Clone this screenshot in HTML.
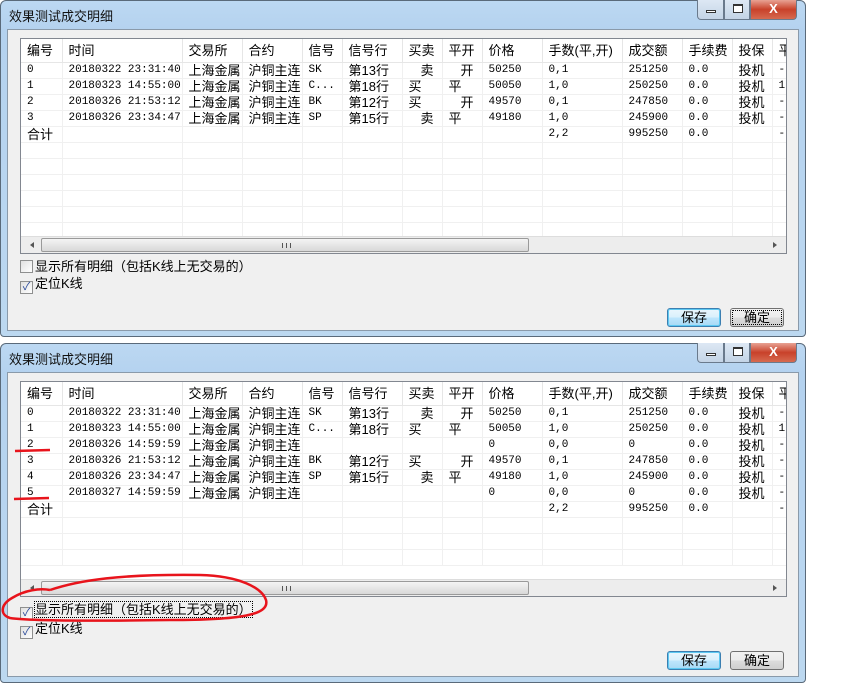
<!DOCTYPE html>
<html><head><meta charset="utf-8"><style>
*{box-sizing:border-box;margin:0;padding:0}
body{width:860px;height:686px;background:#fff;position:relative;overflow:hidden;font-family:"Liberation Sans","Noto Sans CJK SC",sans-serif}
.win{position:absolute;left:0;width:806px;border:1px solid #5a6a7a;border-radius:6px 6px 4px 4px;background:linear-gradient(#bcd8f2,#b4d2ef 30px,#bcd8f0);}
.title{position:absolute;left:8px;top:5px;font-size:13px;color:#111}
.ctl{position:absolute;top:-1px;height:20px;border:1px solid #6a7a8c;border-top:none}
.min{left:696px;width:27px;border-radius:0 0 0 4px;background:linear-gradient(#dde8f4,#c4d4e6)}
.max{left:723px;width:26px;background:linear-gradient(#dde8f4,#c4d4e6)}
.cls{left:749px;width:47px;border-radius:0 0 4px 0;background:linear-gradient(#e8a293,#c8412a 50%,#d66a50);color:#fff;font-weight:bold;font-size:13px;text-align:center;line-height:18px}
.client{position:absolute;left:6px;top:28px;right:6px;bottom:5px;background:#f0f0f0;border:1px solid #8a9aaa}
.list{position:absolute;left:12px;top:8px;width:767px;height:216px;border:1px solid #828790;background:#fff;overflow:hidden}
table{border-collapse:collapse;table-layout:fixed;width:781px;font-size:11px;font-family:"Liberation Mono","Noto Sans CJK SC",monospace}
td{height:16px;border-right:1px solid #f0f0f0;border-bottom:1px solid #f0f0f0;padding-left:6px;white-space:nowrap;overflow:hidden;line-height:15px;color:#000}
tr.h td{height:23px;font-size:13px;font-family:"Liberation Sans","Noto Sans CJK SC",sans-serif;border-right:1px solid #e6e6e6;border-bottom:1px solid #e6e6e6}
.zh{font-family:"Liberation Sans","Noto Sans CJK SC",sans-serif;font-size:13px}
.i{padding-left:18px}
.sb{position:absolute;left:0;right:0;bottom:0;height:17px;background:#ededed;border-top:1px solid #ddd}
.thumb{position:absolute;left:20px;width:488px;top:1px;height:14px;border:1px solid #9a9a9a;border-radius:2px;background:linear-gradient(#f4f4f4,#d8d8d8)}
.thumb:after{content:"";position:absolute;left:240px;top:4px;width:7px;height:5px;border-left:1px solid #555;border-right:1px solid #555;background:linear-gradient(90deg,transparent 3px,#555 3px,#555 4px,transparent 4px)}
.al{position:absolute;left:6px;top:5px;border:3px solid transparent;border-right:4px solid #555}
.ar{position:absolute;right:6px;top:5px;border:3px solid transparent;border-left:4px solid #555}
.cb{position:absolute;left:12px;font-size:13px;color:#000;height:16px;line-height:16px}
.cb i{display:inline-block;width:13px;height:13px;border:1px solid #8e8f8f;background:linear-gradient(135deg,#e0e0e0,#fff);vertical-align:-2px;margin-right:2px;position:relative;font-style:normal;color:#2a4a9a;font-size:11px;line-height:11px;text-align:center}
.btn{position:absolute;width:54px;height:19px;border:1px solid #707070;border-radius:3px;background:linear-gradient(#f2f2f2,#ebebeb 50%,#dddddd 50%,#cfcfcf);font-size:13px;text-align:center;line-height:17px;color:#000}
.btn.d{border-color:#3c7fb1;background:linear-gradient(#eaf6fd,#d9f0fc 50%,#bee6fd 50%,#a7d9f5);box-shadow:inset 0 0 0 1px #5ec9f2}
</style></head><body>

<div class="win" style="top:0;height:337px">
<div class="title">效果测试成交明细</div>
<div class="ctl min"><div style="position:absolute;left:8px;top:10px;width:10px;height:3px;border:1px solid #333;background:#fff"></div></div>
<div class="ctl max"><div style="position:absolute;left:8px;top:4px;width:10px;height:9px;border:1px solid #333;border-top-width:2px;background:#fff"></div></div>
<div class="ctl cls">X</div>
<div class="client">
<div class="list">
<table>
<colgroup><col style="width:41px"><col style="width:120px"><col style="width:60px"><col style="width:60px"><col style="width:40px"><col style="width:60px"><col style="width:40px"><col style="width:40px"><col style="width:60px"><col style="width:80px"><col style="width:60px"><col style="width:50px"><col style="width:40px"><col style="width:30px"></colgroup>
<tr class="h"><td>编号</td><td>时间</td><td>交易所</td><td>合约</td><td>信号</td><td>信号行</td><td>买卖</td><td>平开</td><td>价格</td><td>手数(平,开)</td><td>成交额</td><td>手续费</td><td>投保</td><td>平</td></tr>
<tr><td>0</td><td>20180322 23:31:40</td><td class="zh">上海金属</td><td class="zh">沪铜主连</td><td>SK</td><td class="zh">第13行</td><td class="zh i">卖</td><td class="zh i">开</td><td>50250</td><td>0,1</td><td>251250</td><td>0.0</td><td class="zh">投机</td><td>-</td></tr>
<tr><td>1</td><td>20180323 14:55:00</td><td class="zh">上海金属</td><td class="zh">沪铜主连</td><td>C...</td><td class="zh">第18行</td><td class="zh">买</td><td class="zh">平</td><td>50050</td><td>1,0</td><td>250250</td><td>0.0</td><td class="zh">投机</td><td>1</td></tr>
<tr><td>2</td><td>20180326 21:53:12</td><td class="zh">上海金属</td><td class="zh">沪铜主连</td><td>BK</td><td class="zh">第12行</td><td class="zh">买</td><td class="zh i">开</td><td>49570</td><td>0,1</td><td>247850</td><td>0.0</td><td class="zh">投机</td><td>-</td></tr>
<tr><td>3</td><td>20180326 23:34:47</td><td class="zh">上海金属</td><td class="zh">沪铜主连</td><td>SP</td><td class="zh">第15行</td><td class="zh i">卖</td><td class="zh">平</td><td>49180</td><td>1,0</td><td>245900</td><td>0.0</td><td class="zh">投机</td><td>-</td></tr>
<tr><td class="zh">合计</td><td></td><td></td><td></td><td></td><td></td><td></td><td></td><td></td><td>2,2</td><td>995250</td><td>0.0</td><td></td><td>-</td></tr>
<tr><td></td><td></td><td></td><td></td><td></td><td></td><td></td><td></td><td></td><td></td><td></td><td></td><td></td><td></td></tr>
<tr><td></td><td></td><td></td><td></td><td></td><td></td><td></td><td></td><td></td><td></td><td></td><td></td><td></td><td></td></tr>
<tr><td></td><td></td><td></td><td></td><td></td><td></td><td></td><td></td><td></td><td></td><td></td><td></td><td></td><td></td></tr>
<tr><td></td><td></td><td></td><td></td><td></td><td></td><td></td><td></td><td></td><td></td><td></td><td></td><td></td><td></td></tr>
<tr><td></td><td></td><td></td><td></td><td></td><td></td><td></td><td></td><td></td><td></td><td></td><td></td><td></td><td></td></tr>
<tr><td></td><td></td><td></td><td></td><td></td><td></td><td></td><td></td><td></td><td></td><td></td><td></td><td></td><td></td></tr>
</table>
<div class="sb"><div class="al"></div><div class="thumb"></div><div class="ar"></div></div>
</div>
<div class="cb" style="top:229px"><i></i>显示所有明细（包括K线上无交易的）</div>
<div class="cb" style="top:246px"><i>✓</i>定位K线</div>
<div class="btn d" style="left:659px;top:278px">保存</div>
<div class="btn" style="left:722px;top:278px;outline:1px dotted #000;outline-offset:-3px">确定</div>
</div>
</div>

<div class="win" style="top:343px;height:340px">
<div class="title">效果测试成交明细</div>
<div class="ctl min"><div style="position:absolute;left:8px;top:10px;width:10px;height:3px;border:1px solid #333;background:#fff"></div></div>
<div class="ctl max"><div style="position:absolute;left:8px;top:4px;width:10px;height:9px;border:1px solid #333;border-top-width:2px;background:#fff"></div></div>
<div class="ctl cls">X</div>
<div class="client">
<div class="list">
<table>
<colgroup><col style="width:41px"><col style="width:120px"><col style="width:60px"><col style="width:60px"><col style="width:40px"><col style="width:60px"><col style="width:40px"><col style="width:40px"><col style="width:60px"><col style="width:80px"><col style="width:60px"><col style="width:50px"><col style="width:40px"><col style="width:30px"></colgroup>
<tr class="h"><td>编号</td><td>时间</td><td>交易所</td><td>合约</td><td>信号</td><td>信号行</td><td>买卖</td><td>平开</td><td>价格</td><td>手数(平,开)</td><td>成交额</td><td>手续费</td><td>投保</td><td>平</td></tr>
<tr><td>0</td><td>20180322 23:31:40</td><td class="zh">上海金属</td><td class="zh">沪铜主连</td><td>SK</td><td class="zh">第13行</td><td class="zh i">卖</td><td class="zh i">开</td><td>50250</td><td>0,1</td><td>251250</td><td>0.0</td><td class="zh">投机</td><td>-</td></tr>
<tr><td>1</td><td>20180323 14:55:00</td><td class="zh">上海金属</td><td class="zh">沪铜主连</td><td>C...</td><td class="zh">第18行</td><td class="zh">买</td><td class="zh">平</td><td>50050</td><td>1,0</td><td>250250</td><td>0.0</td><td class="zh">投机</td><td>1</td></tr>
<tr><td>2</td><td>20180326 14:59:59</td><td class="zh">上海金属</td><td class="zh">沪铜主连</td><td></td><td></td><td></td><td></td><td>0</td><td>0,0</td><td>0</td><td>0.0</td><td class="zh">投机</td><td>-</td></tr>
<tr><td>3</td><td>20180326 21:53:12</td><td class="zh">上海金属</td><td class="zh">沪铜主连</td><td>BK</td><td class="zh">第12行</td><td class="zh">买</td><td class="zh i">开</td><td>49570</td><td>0,1</td><td>247850</td><td>0.0</td><td class="zh">投机</td><td>-</td></tr>
<tr><td>4</td><td>20180326 23:34:47</td><td class="zh">上海金属</td><td class="zh">沪铜主连</td><td>SP</td><td class="zh">第15行</td><td class="zh i">卖</td><td class="zh">平</td><td>49180</td><td>1,0</td><td>245900</td><td>0.0</td><td class="zh">投机</td><td>-</td></tr>
<tr><td>5</td><td>20180327 14:59:59</td><td class="zh">上海金属</td><td class="zh">沪铜主连</td><td></td><td></td><td></td><td></td><td>0</td><td>0,0</td><td>0</td><td>0.0</td><td class="zh">投机</td><td>-</td></tr>
<tr><td class="zh">合计</td><td></td><td></td><td></td><td></td><td></td><td></td><td></td><td></td><td>2,2</td><td>995250</td><td>0.0</td><td></td><td>-</td></tr>
<tr><td></td><td></td><td></td><td></td><td></td><td></td><td></td><td></td><td></td><td></td><td></td><td></td><td></td><td></td></tr>
<tr><td></td><td></td><td></td><td></td><td></td><td></td><td></td><td></td><td></td><td></td><td></td><td></td><td></td><td></td></tr>
<tr><td></td><td></td><td></td><td></td><td></td><td></td><td></td><td></td><td></td><td></td><td></td><td></td><td></td><td></td></tr>
</table>
<div class="sb"><div class="al"></div><div class="thumb"></div><div class="ar"></div></div>
</div>
<div class="cb" style="top:229px"><i>✓</i><span style="outline:1px dotted #000">显示所有明细（包括K线上无交易的）</span></div>
<div class="cb" style="top:248px"><i>✓</i>定位K线</div>
<div class="btn d" style="left:659px;top:278px">保存</div>
<div class="btn" style="left:722px;top:278px">确定</div>
</div>
</div>

<svg width="860" height="686" style="position:absolute;left:0;top:0" fill="none" stroke="#e8141c" stroke-width="2.5">
<path d="M15,451 L50,450"/>
<path d="M14,499 L49,498"/>
<path d="M50,590 C80,580 120,574 200,575 C240,576 262,588 266,600 C270,615 240,620 170,620 C100,621 30,621 10,618 C0,615 0,605 12,598 C25,590 40,588 50,590"/>
</svg>
</body></html>
